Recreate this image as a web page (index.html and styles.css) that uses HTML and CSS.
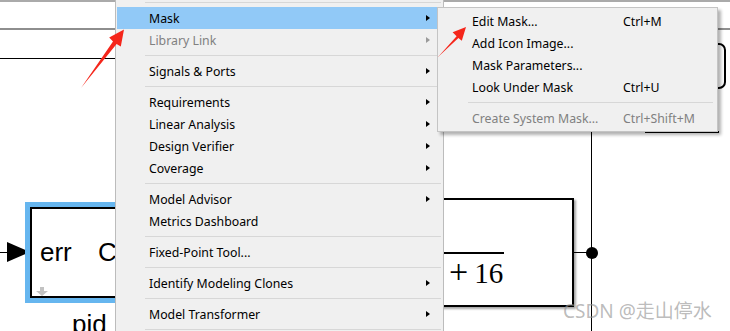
FILE: index.html
```html
<!DOCTYPE html>
<html lang="en">
<head>
<meta charset="utf-8">
<title>Mask menu</title>
<link rel="stylesheet" href="styles.css">
</head>
<body>
<div class="screen">
  <div class="toolbar"></div>
  <div class="canvas">
    <div class="wire wire-top"></div>
    <div class="mask-block"></div>
    <div class="edge-under"></div>
    <div class="wire wire-vert"></div>
    <div class="wire wire-out"></div>
    <div class="junction"></div>
    <div class="tf-block">
      <div class="tf-frac"></div>
      <div class="tf-den"><span class="plus">+</span><span>16</span></div>
    </div>
    <div class="wire wire-in"></div>
    <svg class="inport" width="24" height="20" viewBox="0 0 24 20"><polygon points="0,0 23,10 0,20" fill="#000"/></svg>
    <div class="pid-sel">
      <div class="pid-block">
        <span class="port-label">err</span><span class="port-label out">C</span>
        <svg class="down-icon" width="12" height="9" viewBox="0 0 12 9"><polygon points="4,0 8,0 8,4 12,4 6,9 0,4 4,4" fill="#c2c2c2"/></svg>
      </div>
    </div>
    <div class="pid-name">pid</div>
  </div>

  <div class="menu main-menu">
    <div class="sep"></div>
    <div class="item active"><span class="label">Mask</span><span class="arrow"></span></div>
    <div class="item disabled"><span class="label">Library Link</span><span class="arrow"></span></div>
    <div class="sep"></div>
    <div class="item"><span class="label">Signals &amp; Ports</span><span class="arrow"></span></div>
    <div class="sep"></div>
    <div class="item"><span class="label">Requirements</span><span class="arrow"></span></div>
    <div class="item"><span class="label">Linear Analysis</span><span class="arrow"></span></div>
    <div class="item"><span class="label">Design Verifier</span><span class="arrow"></span></div>
    <div class="item"><span class="label">Coverage</span><span class="arrow"></span></div>
    <div class="sep"></div>
    <div class="item"><span class="label">Model Advisor</span><span class="arrow"></span></div>
    <div class="item"><span class="label">Metrics Dashboard</span></div>
    <div class="sep"></div>
    <div class="item"><span class="label">Fixed-Point Tool...</span></div>
    <div class="sep"></div>
    <div class="item"><span class="label">Identify Modeling Clones</span><span class="arrow"></span></div>
    <div class="sep"></div>
    <div class="item"><span class="label">Model Transformer</span><span class="arrow"></span></div>
    <div class="sep"></div>
  </div>

  <div class="menu sub-menu">
    <div class="sitem"><span class="label">Edit Mask...</span><span class="key">Ctrl+M</span></div>
    <div class="sitem"><span class="label">Add Icon Image...</span><span class="key"></span></div>
    <div class="sitem"><span class="label">Mask Parameters...</span><span class="key"></span></div>
    <div class="sitem"><span class="label">Look Under Mask</span><span class="key">Ctrl+U</span></div>
    <div class="ssep"></div>
    <div class="sitem disabled"><span class="label">Create System Mask...</span><span class="key">Ctrl+Shift+M</span></div>
  </div>

  <svg class="annot" width="730" height="331" viewBox="0 0 730 331">
    <polygon points="81,88 113,41.5 109.2,37.6 124,29.5 120.8,46.4 116.6,44" fill="#f5261b"/>
    <polygon points="438,57 456.6,36.2 452.6,32.2 466,27 461.8,40.8 458.4,38" fill="#f5261b"/>
  </svg>

  <div class="watermark">CSDN @走山停水</div>
</div>
</body>
</html>
```

FILE: styles.css
```css
* { box-sizing: border-box; }

html, body {
  margin: 0;
  padding: 0;
  background: #fff;
}

.screen {
  position: relative;
  width: 730px;
  height: 331px;
  overflow: hidden;
  background: #fff;
}

.toolbar {
  height: 30px;
  border-top: 2px solid #aaaaaa;
  border-bottom: 2px solid #8e8e8e;
  background: #fff;
}

.canvas {
  position: relative;
  height: 301px;
}

/* diagram elements (free canvas) */
.wire { position: absolute; background: #000; }
.wire-top { left: 0; top: 28px; width: 120px; height: 1px; }
.wire-vert { left: 591px; top: 100px; width: 1px; height: 210px; }
.wire-out { left: 572px; top: 222px; width: 20px; height: 1px; }
.wire-in { left: 0; top: 222px; width: 8px; height: 1px; }

.junction {
  position: absolute;
  left: 586px;
  top: 217px;
  width: 12px;
  height: 12px;
  border-radius: 50%;
  background: #000;
}

.mask-block {
  position: absolute;
  left: 600px;
  top: 13px;
  width: 126px;
  height: 46px;
  border: 2px solid #000;
  border-radius: 7px;
}

.edge-under {
  position: absolute;
  left: 645px;
  top: 101px;
  width: 74px;
  height: 2px;
  background: #000;
}

.tf-block {
  position: absolute;
  left: 380px;
  top: 168px;
  width: 194px;
  height: 109px;
  border: 2px solid #000;
  background: #fff;
  box-shadow: 2px 2px 2px rgba(0, 0, 0, 0.35);
}

.tf-frac {
  position: absolute;
  left: 20px;
  top: 52px;
  width: 102px;
  height: 2px;
  background: #000;
}

.tf-den {
  position: absolute;
  left: 67px;
  top: 57px;
  display: flex;
  align-items: baseline;
  font-family: "Liberation Serif", "DejaVu Serif", serif;
  font-size: 29px;
  line-height: 30px;
  color: #000;
}
.tf-den .plus {
  font-size: 34px;
  margin-right: 6px;
}

.inport {
  position: absolute;
  left: 7px;
  top: 212px;
}

.pid-sel {
  position: absolute;
  left: 25px;
  top: 172px;
  width: 140px;
  height: 101px;
  border: 5px solid #66b6ef;
}

.pid-block {
  position: relative;
  width: 100%;
  height: 100%;
  border: 2px solid #000;
  background: #fff;
}

.port-label {
  position: absolute;
  left: 8px;
  top: 28px;
  font-family: "Liberation Sans", Arial, sans-serif;
  font-size: 26px;
  line-height: 30px;
  color: #000;
}
.port-label.out { left: 66px; }

.down-icon {
  position: absolute;
  left: 4px;
  top: 78px;
}

.pid-name {
  position: absolute;
  left: 72px;
  top: 279px;
  font-family: "Liberation Sans", Arial, sans-serif;
  font-size: 26px;
  line-height: 30px;
  color: #000;
}

/* menus */
.menu {
  position: absolute;
  background: #f0f0f0;
  font-family: "Noto Sans", "Open Sans", sans-serif;
  font-size: 12.3px;
  color: #000;
  display: flex;
  flex-direction: column;
}

.main-menu {
  left: 115px;
  top: -4px;
  width: 329px;
  height: 345px;
  border: 1px solid #bcbcbc;
  padding: 1px;
}

.item {
  height: 22px;
  display: flex;
  align-items: center;
  padding-left: 32px;
  padding-right: 12px;
  flex-shrink: 0;
}
.item .label { flex: 1; white-space: nowrap; }
.item.active { background: #91c9f7; }
.item.disabled { color: #808080; }

.arrow {
  width: 0;
  height: 0;
  border-left: 4px solid #000;
  border-top: 3.5px solid transparent;
  border-bottom: 3.5px solid transparent;
}
.item.disabled .arrow { border-left-color: #9a9a9a; }

.sep {
  height: 9px;
  flex-shrink: 0;
  padding-top: 4px;
  margin-left: 28px;
  margin-right: 1px;
}
.sep::before {
  content: "";
  display: block;
  height: 1px;
  background: #d7d7d7;
}

.sub-menu {
  left: 437px;
  top: 7px;
  width: 281px;
  height: 125px;
  border: 1px solid #c4c4c4;
  padding: 2px 1px;
  box-shadow: 3px 3px 3px rgba(0, 0, 0, 0.3);
}

.sitem {
  height: 22px;
  display: grid;
  grid-template-columns: 151px 1fr;
  align-items: center;
  padding-left: 33px;
  white-space: nowrap;
  flex-shrink: 0;
}
.sitem.disabled { color: #808080; }

.ssep {
  height: 9px;
  flex-shrink: 0;
  padding-top: 4px;
  margin-left: 29px;
  margin-right: 3px;
}
.ssep::before {
  content: "";
  display: block;
  height: 1px;
  background: #d7d7d7;
}

/* overlays */
.annot {
  position: absolute;
  left: 0;
  top: 0;
  pointer-events: none;
}

.watermark {
  position: absolute;
  left: 563px;
  top: 299px;
  font-family: "Noto Sans", "Noto Sans CJK SC", sans-serif;
  font-size: 19px;
  line-height: 24px;
  color: rgba(150, 150, 150, 0.65);
  white-space: nowrap;
}
```
